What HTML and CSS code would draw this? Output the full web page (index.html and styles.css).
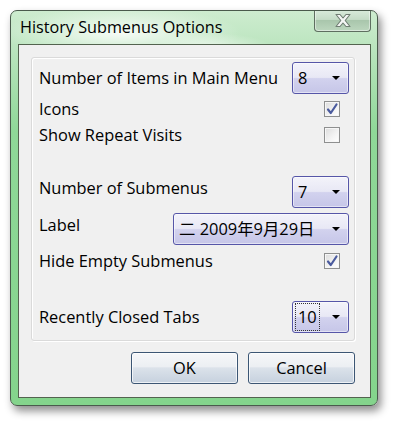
FILE: index.html
```html
<!DOCTYPE html>
<html>
<head>
<meta charset="utf-8">
<link rel="stylesheet" href="styles.css">
</head>
<body>
<div class="window">
  <div class="titlebar">
    <span class="title">History Submenus Options</span>
    <div class="close">
      <svg width="20" height="15" viewBox="0 0 20 15">
        <path d="M3 1.5 L7 1.5 L10 5 L13 1.5 L17 1.5 L12.2 7.5 L17 13.5 L13 13.5 L10 10 L7 13.5 L3 13.5 L7.8 7.5 Z" fill="#f4f6f4" stroke="#6f7d72" stroke-width="1.1" stroke-linejoin="round"/>
      </svg>
    </div>
  </div>
  <div class="client">
    <div class="group">
      <div class="row row-dd first">
        <span class="lbl">Number of Items in Main Menu</span>
        <div class="dd dd-small"><span class="val">8</span><span class="arrow"></span></div>
      </div>
      <div class="row row-cb">
        <span class="lbl">Icons</span>
        <span class="cb checked"><svg width="14" height="14" viewBox="0 0 14 14"><path d="M3 7.5 L5.8 11 L11.5 2.5" fill="none" stroke="#4b5b9e" stroke-width="2.2" stroke-linecap="round" stroke-linejoin="round"/></svg></span>
      </div>
      <div class="row row-cb">
        <span class="lbl">Show Repeat Visits</span>
        <span class="cb"></span>
      </div>
      <div class="row row-dd top sub">
        <span class="lbl">Number of Submenus</span>
        <div class="dd dd-small"><span class="val">7</span><span class="arrow"></span></div>
      </div>
      <div class="row row-dd top label-row">
        <span class="lbl">Label</span>
        <div class="dd dd-wide"><span class="val">二 2009年9月29日</span><span class="arrow"></span></div>
      </div>
      <div class="row row-cb hide-row">
        <span class="lbl">Hide Empty Submenus</span>
        <span class="cb checked"><svg width="14" height="14" viewBox="0 0 14 14"><path d="M3 7.5 L5.8 11 L11.5 2.5" fill="none" stroke="#4b5b9e" stroke-width="2.2" stroke-linecap="round" stroke-linejoin="round"/></svg></span>
      </div>
      <div class="row row-dd closed">
        <span class="lbl">Recently Closed Tabs</span>
        <div class="dd dd-small"><span class="val focus">10</span><span class="arrow"></span></div>
      </div>
    </div>
    <div class="buttons">
      <div class="btn">OK</div>
      <div class="btn">Cancel</div>
    </div>
  </div>
</div>
</body>
</html>
```
FILE: styles.css
```css
html, body {
  margin: 0;
  padding: 0;
  background: #ffffff;
}
body {
  padding: 10px 18px 18px 10px;
  font-family: "Open Sans", "Noto Sans CJK SC", sans-serif;
  font-size: 16px;
  color: #000;
}
.window {
  width: 366px;
  height: 394px;
  border: 1px solid #4a5a4c;
  border-radius: 7px;
  background: linear-gradient(to bottom, #cdeccf 0px, #b9e4bd 40px, #8fd898 120px, #84d48c 100%);
  box-shadow: 3px 5px 9px rgba(0, 0, 0, 0.45);
  display: flex;
  flex-direction: column;
  overflow: hidden;
}
.titlebar {
  height: 33px;
  display: flex;
  align-items: flex-start;
  justify-content: space-between;
  background:
    radial-gradient(ellipse 120px 26px at 110px 22px, rgba(255,255,255,0.85), rgba(255,255,255,0) 100%),
    radial-gradient(ellipse 60px 14px at 200px 36px, rgba(255,255,255,0.6), rgba(255,255,255,0) 100%);
}
.title {
  margin-left: 9px;
  margin-top: 6px;
  font-size: 16.2px;
  line-height: 20px;
  color: #000;
}
.close {
  margin-right: 6px;
  margin-top: -1px;
  width: 55px;
  height: 21px;
  border: 1px solid #5e6e60;
  border-top: none;
  border-radius: 0 0 4px 4px;
  background: linear-gradient(to bottom, #d9ebdb 0%, #c5dcc7 45%, #a9c6ac 50%, #bcd6be 100%);
  display: flex;
  align-items: center;
  justify-content: center;
  box-shadow: inset 0 0 0 1px rgba(255,255,255,0.45);
}
.close svg { display: block; }
.client {
  margin: 0 6px 7px 7px;
  flex: 1;
  border: 1px solid #53634f;
  background: #f0f0f0;
  display: flex;
  flex-direction: column;
  padding: 12px 15px 0 12px;
}
.group {
  border: 1px solid #dadada;
  box-shadow: inset 1px 1px 0 #ffffff, 1px 1px 0 #ffffff;
  border-radius: 3px;
  height: 278px;
  padding: 4px 5px 0 7px;
  display: flex;
  flex-direction: column;
}
.row {
  display: flex;
  justify-content: space-between;
  align-items: center;
}
.row-dd { height: 32px; }
.row-cb { height: 26px; padding-right: 9px; }
.row.top { align-items: flex-start; }
.row.first { margin-bottom: 2px; }
.lbl {
  font-size: 16.4px;
  line-height: 20px;
  white-space: nowrap;
}
.row.sub { margin-top: 28px; }
.row.sub .lbl { padding-top: 2px; }
.row.label-row { margin-top: 5px; }
.row.label-row .lbl { padding-top: 2px; }
.row.hide-row { margin-top: 3px; }
.row.closed { margin-top: 27px; }
.dd {
  box-sizing: border-box;
  height: 32px;
  border: 1px solid #5656a8;
  border-radius: 3px;
  background: linear-gradient(to bottom, #f3f3fa 0%, #e8e8f5 48%, #d2d2ee 52%, #c6c6e8 100%);
  display: flex;
  align-items: center;
  justify-content: space-between;
  padding: 0 8px 0 5px;
  box-shadow: inset 0 0 0 1px rgba(255,255,255,0.5);
}
.dd-small { width: 57px; }
.dd-wide { width: 176px; }
.dd .val {
  font-size: 16.4px;
  line-height: 20px;
  white-space: nowrap;
}
.dd .val.focus {
  outline: 1px dotted #333;
  outline-offset: 0;
  padding: 3px 2px;
  margin-left: -2px;
}
.arrow {
  width: 0;
  height: 0;
  border-left: 4px solid transparent;
  border-right: 4px solid transparent;
  border-top: 4px solid #000;
}
.cb {
  box-sizing: border-box;
  width: 16px;
  height: 16px;
  border: 1px solid #8e8f8f;
  background: linear-gradient(135deg, #dcdcdc 0%, #f4f4f4 60%, #ffffff 100%);
  box-shadow: inset 0 0 0 1px #f6f6f6;
  display: flex;
  align-items: center;
  justify-content: center;
}
.cb svg { display: block; }
.buttons {
  display: flex;
  justify-content: flex-end;
  gap: 10px;
  margin-top: 11px;
}
.btn {
  box-sizing: border-box;
  width: 107px;
  height: 32px;
  border: 1px solid #3c5674;
  border-radius: 3px;
  background: linear-gradient(to bottom, #f6f7f9 0%, #eceff3 45%, #dbe2ea 50%, #c6d1de 100%);
  box-shadow: inset 0 0 0 1px rgba(255,255,255,0.7);
  display: flex;
  align-items: center;
  justify-content: center;
  font-size: 16.4px;
  line-height: 20px;
}
```
